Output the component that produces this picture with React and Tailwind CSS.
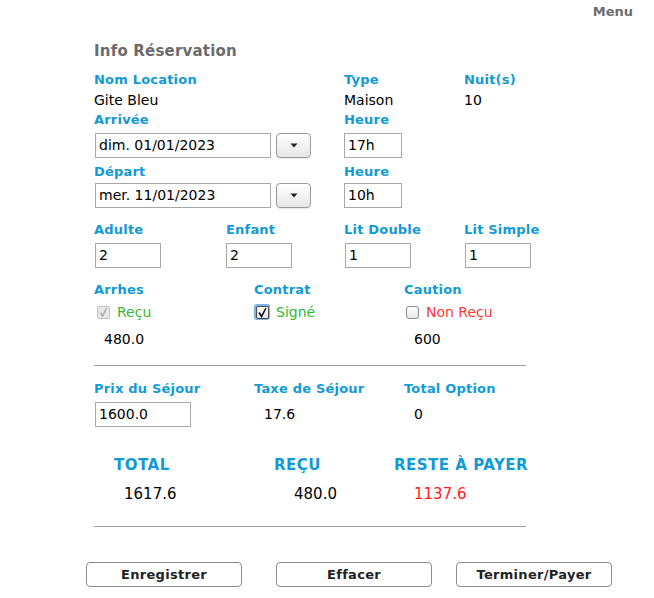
import React from "react";

const F = { fontFamily: '"DejaVu Sans", Verdana, sans-serif' };

function Label({ children, w }) {
  return (
    <div className={`h-[20px] leading-[20px] text-[13px] font-bold text-[#119ad6] tracking-[0.2px] ${w || ""}`}>{children}</div>
  );
}

function Field({ value, w }) {
  return (
    <div className={`h-[25px] ${w} border border-[#a8a8a8] bg-white pl-[3px] text-[14px] leading-[23px] text-black`}>{value}</div>
  );
}

function DropBtn() {
  return (
    <div className="ml-[5px] h-[25px] w-[35px] rounded-[4px] border border-[#9a9a9a] bg-gradient-to-b from-white to-[#e6e6e6] flex items-center justify-center shadow-[0_1px_0_rgba(0,0,0,0.08)]">
      <svg width="8" height="5" viewBox="0 0 8 5"><path d="M0.5 0.5 L7.5 0.5 L4 4.5 Z" fill="#222" /></svg>
    </div>
  );
}

function Check({ kind }) {
  if (kind === "disabled")
    return (
      <div className="w-[13px] h-[13px] rounded-[2px] border border-[#c4c4c4] bg-[#e8e8e8] flex items-center justify-center">
        <svg width="11" height="11" viewBox="0 0 11 11"><path d="M2.5 5.5 L4.5 9 L8.5 1.5" stroke="#a8a8a8" strokeWidth="1.4" fill="none" /></svg>
      </div>
    );
  if (kind === "checked")
    return (
      <div className="w-[16px] h-[16px] rounded-[3px] bg-[#7fb2e5] p-[1.5px]">
        <div className="w-full h-full rounded-[2px] border border-[#4a4a4a] bg-gradient-to-b from-white to-[#e4e4e4] flex items-center justify-center">
          <svg width="11" height="11" viewBox="0 0 11 11"><path d="M2 5.5 L4.5 9.5 L9 1" stroke="#111" strokeWidth="1.6" fill="none" /></svg>
        </div>
      </div>
    );
  return <div className="w-[13px] h-[13px] rounded-[3px] border border-[#8a8a8a] bg-gradient-to-b from-white to-[#e8e8e8]" />;
}

function Btn({ children, ml }) {
  return (
    <div className={`${ml} w-[156px] h-[25px] rounded-[4px] border border-[#8c8c8c] bg-white flex items-center justify-center text-[13px] font-bold text-[#222] tracking-[0.3px]`}>{children}</div>
  );
}

export default function App() {
  return (
    <div style={F} className="w-[654px] h-[598px] bg-white overflow-hidden">
      <div className="h-[22px] pt-[2px] flex justify-end pr-[21px] text-[13px] leading-[20px] font-bold text-[#6e6e6e]">Menu</div>
      <div className="pl-[94px]">
        <div className="mt-[19px] h-[20px] leading-[20px] text-[15px] font-bold text-[#6b6b6b] tracking-[0.2px]">Info Réservation</div>

        <div className="mt-[9px] flex">
          <Label w="w-[250px]">Nom Location</Label>
          <Label w="w-[120px]">Type</Label>
          <Label>Nuit(s)</Label>
        </div>
        <div className="flex h-[20px] leading-[20px] text-[14px] text-black">
          <div className="w-[250px]">Gite Bleu</div>
          <div className="w-[120px]">Maison</div>
          <div>10</div>
        </div>
        <div className="flex">
          <Label w="w-[250px]">Arrivée</Label>
          <Label>Heure</Label>
        </div>
        <div className="mt-[3px] flex">
          <div className="w-[250px] flex pl-[1px]">
            <Field value="dim. 01/01/2023" w="w-[176px]" />
            <DropBtn />
          </div>
          <Field value="17h" w="w-[58px]" />
        </div>

        <div className="mt-[4px] flex">
          <Label w="w-[250px]">Départ</Label>
          <Label>Heure</Label>
        </div>
        <div className="mt-[1px] flex">
          <div className="w-[250px] flex pl-[1px]">
            <Field value="mer. 11/01/2023" w="w-[176px]" />
            <DropBtn />
          </div>
          <Field value="10h" w="w-[58px]" />
        </div>

        <div className="mt-[12px] flex">
          <Label w="w-[132px]">Adulte</Label>
          <Label w="w-[118px]">Enfant</Label>
          <Label w="w-[120px]">Lit Double</Label>
          <Label>Lit Simple</Label>
        </div>
        <div className="mt-[3px] flex">
          <div className="w-[132px] pl-[1px]"><Field value="2" w="w-[66px]" /></div>
          <div className="w-[118px]"><Field value="2" w="w-[66px]" /></div>
          <div className="w-[120px] pl-[1px]"><Field value="1" w="w-[66px]" /></div>
          <div className="pl-[1px]"><Field value="1" w="w-[66px]" /></div>
        </div>

        <div className="mt-[12px] flex">
          <Label w="w-[160px]">Arrhes</Label>
          <Label w="w-[150px]">Contrat</Label>
          <Label>Caution</Label>
        </div>
        <div className="mt-[2px] flex h-[20px] items-center text-[14px]">
          <div className="w-[160px] flex items-center pl-[3px]">
            <Check kind="disabled" />
            <span className="ml-[7px] text-[#35b835]">Reçu</span>
          </div>
          <div className="w-[150px] flex items-center pl-[0px]">
            <Check kind="checked" />
            <span className="ml-[6px] text-[#35b835]">Signé</span>
          </div>
          <div className="flex items-center pl-[2px]">
            <Check kind="unchecked" />
            <span className="ml-[7px] text-[#ff3838]">Non Reçu</span>
          </div>
        </div>
        <div className="mt-[7px] flex h-[20px] leading-[20px] text-[14px] text-black">
          <div className="w-[310px] pl-[10px]">480.0</div>
          <div className="pl-[10px]">600</div>
        </div>

        <div className="mt-[16px] w-[432px] h-px bg-[#a0a0a0]" />

        <div className="mt-[13px] flex">
          <Label w="w-[160px]">Prix du Séjour</Label>
          <Label w="w-[150px]">Taxe de Séjour</Label>
          <Label>Total Option</Label>
        </div>
        <div className="mt-[3px] flex items-center text-[14px] text-black">
          <div className="w-[160px] pl-[1px]"><Field value="1600.0" w="w-[96px]" /></div>
          <div className="w-[150px] pl-[10px]">17.6</div>
          <div className="pl-[10px]">0</div>
        </div>

        <div className="mt-[28px] flex h-[20px] leading-[20px] text-[15px] font-bold text-[#119ad6] tracking-[0.5px]">
          <div className="w-[180px] pl-[20px]">TOTAL</div>
          <div className="w-[120px]">REÇU</div>
          <div>RESTE À PAYER</div>
        </div>
        <div className="mt-[9px] flex h-[20px] leading-[20px] text-[15px]">
          <div className="w-[200px] pl-[30px] text-black">1617.6</div>
          <div className="w-[120px] text-black">480.0</div>
          <div className="text-[#ff1a1a]">1137.6</div>
        </div>

        <div className="mt-[22px] w-[432px] h-px bg-[#a0a0a0]" />
      </div>

      <div className="mt-[35px] flex pl-[86px]">
        <Btn ml="">Enregistrer</Btn>
        <Btn ml="ml-[34px]">Effacer</Btn>
        <Btn ml="ml-[24px]">Terminer/Payer</Btn>
      </div>
    </div>
  );
}
